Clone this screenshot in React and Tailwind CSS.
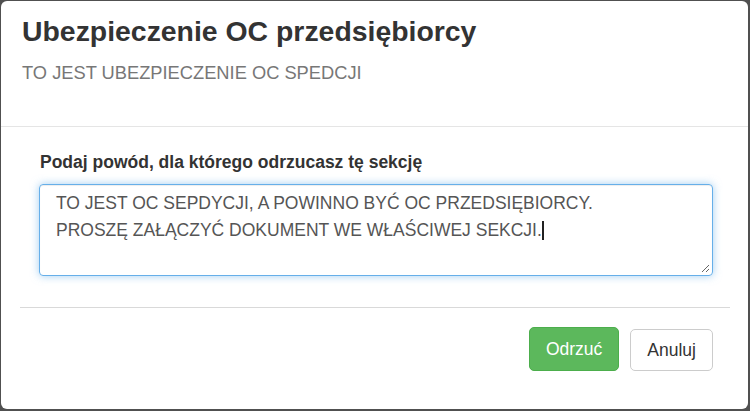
import React from 'react';

const RejectModal = () => {
    return (
        <div className="w-[750px] h-[411px] bg-[#505050] pt-[1px] pl-[1px] overflow-hidden font-['Liberation_Sans',Arial,sans-serif]">
            <div className="w-[747px] h-[408px] bg-white rounded-[6px] flex flex-col">
                {/* Header */}
                <div className="pl-[21px] pt-[16px] pb-[43px] border-b border-[#e5e5e5]">
                    <h4 className="text-[28.4px] leading-[28px] font-bold text-[#333]">Ubezpieczenie OC przedsiębiorcy</h4>
                    <p className="mt-[18px] text-[18.3px] leading-[20px] text-[#777]">TO JEST UBEZPIECZENIE OC SPEDCJI</p>
                </div>

                {/* Body */}
                <div className="pl-[38px] pr-[35px] pt-[25px]">
                    <label className="block pl-[1px] text-[17.5px] leading-[20px] font-bold text-[#333]">
                        Podaj powód, dla którego odrzucasz tę sekcję
                    </label>
                    <div className="relative mt-[12px] h-[92px] rounded-[4px] border border-[#66afe9] shadow-[inset_0_1px_1px_rgba(0,0,0,0.075),0_0_8px_rgba(102,175,233,0.6)] pl-[16px] pt-[5px] text-[17.5px] leading-[27px] text-[#555]">
                        <div>TO JEST OC SEPDYCJI, A POWINNO BYĆ OC PRZEDSIĘBIORCY.</div>
                        <div>
                            PROSZĘ ZAŁĄCZYĆ DOKUMENT WE WŁAŚCIWEJ SEKCJI.
                            <span className="inline-block w-[2px] h-[19px] bg-[#222] align-[-4px]" />
                        </div>
                        <svg className="absolute right-[2px] bottom-[2px]" width="9" height="9" viewBox="0 0 9 9">
                            <path d="M8 1 L1 8 M8 5 L5 8" stroke="#666" strokeWidth="1" fill="none" />
                        </svg>
                    </div>
                </div>

                <div className="ml-[19px] mr-[18px] mt-[31px] border-t border-[#d9d9d9]" />

                {/* Footer */}
                <div className="flex justify-end gap-[11px] pr-[35px] pt-[19px]">
                    <button className="h-[44px] px-[16px] rounded-[5px] bg-[#5cb85c] border border-[#4cae4c] text-white text-[17.5px]">
                        Odrzuć
                    </button>
                    <button className="h-[42px] mt-[2px] px-[16px] rounded-[5px] bg-white border border-[#ccc] text-[#333] text-[17.5px]">
                        Anuluj
                    </button>
                </div>
            </div>
        </div>
    );
};

export default function App() {
    return <RejectModal />;
}
